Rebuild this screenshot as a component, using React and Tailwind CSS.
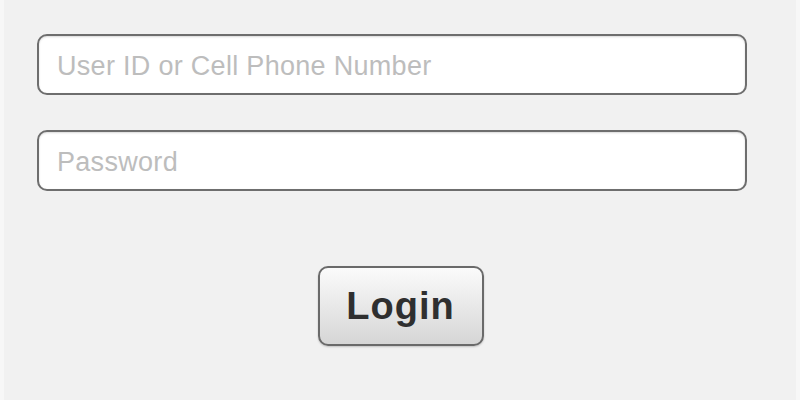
import React from "react";

const App = () => {
  return (
    <div className="w-[800px] h-[400px] bg-[#f7f7f7] flex px-[4px] overflow-hidden" style={{ fontFamily: '"Liberation Sans", Arial, sans-serif' }}>
      <div className="flex-1 bg-[#f1f1f1] flex flex-col px-[33px] pt-[34px]">
        <input
          type="text"
          placeholder="User ID or Cell Phone Number"
          className="w-[710px] h-[61px] rounded-[10px] border-2 border-[#6e6e6e] bg-white px-[18px] pt-[3px] text-[27px] tracking-[0.3px] text-[#333] placeholder:text-[#bdbdbd] outline-none shadow-[inset_0_1px_2px_rgba(0,0,0,0.15)]"
        />
        <input
          type="password"
          placeholder="Password"
          className="mt-[35px] w-[710px] h-[61px] rounded-[10px] border-2 border-[#6e6e6e] bg-white px-[18px] pt-[3px] text-[27px] tracking-[0.3px] text-[#333] placeholder:text-[#bdbdbd] outline-none shadow-[inset_0_1px_2px_rgba(0,0,0,0.15)]"
        />
        <div className="flex justify-center mt-[75px] pl-[1px]">
          <button className="w-[166px] h-[80px] rounded-[10px] border-2 border-[#6a6a6a] bg-gradient-to-b from-[#fbfbfb] to-[#d6d6d6] text-[38px] tracking-[1px] font-bold text-[#2f2f2f] shadow-[0_1px_2px_rgba(0,0,0,0.2)]">
            Login
          </button>
        </div>
      </div>
    </div>
  );
};

export default App;
